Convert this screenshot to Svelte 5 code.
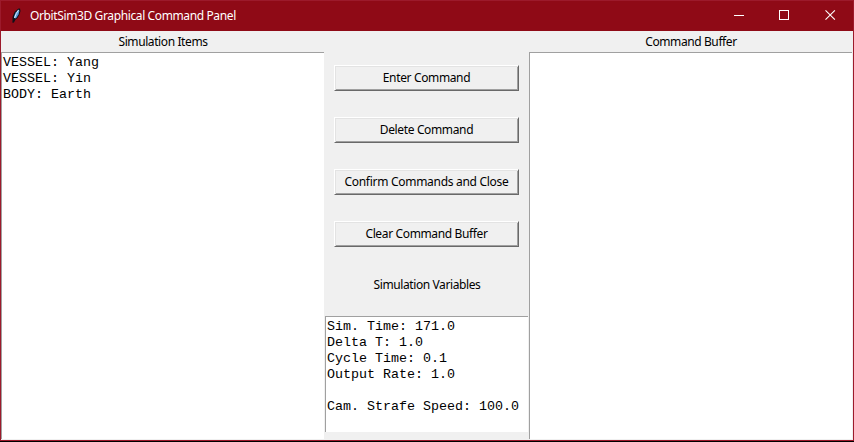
<script>
  const items = ['VESSEL: Yang', 'VESSEL: Yin', 'BODY: Earth'];
  const commands = [
    { label: 'Enter Command', spacing: -0.36 },
    { label: 'Delete Command', spacing: -0.36 },
    { label: 'Confirm Commands and Close', spacing: -0.29 },
    { label: 'Clear Command Buffer', spacing: -0.36 }
  ];
  const variables = [
    'Sim. Time: 171.0',
    'Delta T: 1.0',
    'Cycle Time: 0.1',
    'Output Rate: 1.0',
    '',
    'Cam. Strafe Speed: 100.0'
  ];
</script>

<div class="window">
  <header>
    <svg class="feather" width="12" height="18" viewBox="0 0 12 18" aria-hidden="true">
      <path d="M8.500 1.500 L10 1.500 L10.500 4 L9.500 7.500 L7.500 11 L5.500 12.500 L4 15.500 L2.500 15.500 L2.500 10 L4.500 5 Z" fill="#101018" />
      <path d="M8.800 2.500 L9.400 4 L8.500 7.500 L6.500 10.700 L4.300 12 L4 9.500 L5.700 5.500 Z" fill="#5c9cdc" />
      <path d="M8.500 3 L6.300 6.500 L4.500 11" fill="none" stroke="#d8ecf8" stroke-width="1" />
      <path d="M4.500 11 L3 15.500" fill="none" stroke="#101018" stroke-width="1" />
    </svg>
    <h1><span>OrbitSim3D Graphical Command Panel</span></h1>
    <nav>
      <svg width="46" height="30" viewBox="0 0 46 30" shape-rendering="crispEdges"><path d="M18 14h10v1H18z" fill="#fff" /></svg>
      <svg width="46" height="30" viewBox="0 0 46 30" shape-rendering="crispEdges"><rect x="17.5" y="9.5" width="9" height="9" fill="none" stroke="#fff" /></svg>
      <svg width="46" height="30" viewBox="0 0 46 30"><path d="M17.500 9.300l9.400 9.400M26.900 9.300l-9.400 9.400" fill="none" stroke="#fff" stroke-width="1.1" /></svg>
    </nav>
  </header>

  <main>
    <section class="side">
      <h2>Simulation Items</h2>
      <div class="box">{#each items as line}<p>{line}</p>{/each}</div>
    </section>

    <section class="middle">
      <div class="buttons">
        {#each commands as c}
          <button style="letter-spacing: {c.spacing}px">{c.label}</button>
        {/each}
      </div>
      <h2 class="vars">Simulation Variables</h2>
      <div class="box values">{#each variables as line}<p>{line}</p>{/each}</div>
    </section>

    <section class="side">
      <h2>Command Buffer</h2>
      <div class="box"></div>
    </section>
  </main>
</div>

<style>
  :global(body) { margin: 0; overflow: hidden; background: #000; }
  .window {
    box-sizing: border-box;
    width: 854px;
    height: 441px;
    display: flex;
    flex-direction: column;
    border: 1px solid #9c1a2b;
    background: #f0f0f0;
    color: #000;
    font-family: "Noto Sans", "Open Sans", sans-serif;
    font-size: 12px;
  }
  header {
    flex: 0 0 30px;
    display: flex;
    align-items: center;
    background: #8f0a16;
    color: #fff;
  }
  .feather { margin: 0 8px 0 9px; }
  h1, h2, p { margin: 0; font-weight: 400; }
  h1 { flex: 1; font-size: 12px; line-height: 28px; letter-spacing: -0.38px; white-space: nowrap; }
  nav { display: flex; margin-right: -1px; }
  nav svg { display: block; }
  main { flex: 1; min-height: 0; display: flex; }
  .side { width: 324px; display: flex; flex-direction: column; }
  h2 { height: 21px; font-size: 12px; line-height: 21px; text-align: center; letter-spacing: -0.4px; }
  .box {
    box-sizing: border-box;
    flex: 1;
    margin-right: 1px;
    padding: 2px 1px;
    border-top: 1px solid #a0a0a0;
    border-left: 1px solid #a0a0a0;
    background: #fff;
    font-family: "Liberation Mono", "Courier New", monospace;
    font-size: 13.333px;
    line-height: 16px;
  }
  .side .box { margin-bottom: 1px; }
  .box p { height: 16px; white-space: pre; }
  .middle { width: 204px; display: flex; flex-direction: column; }
  .buttons { display: flex; flex-direction: column; gap: 26px; padding: 34px 10px 0 9px; }
  button {
    box-sizing: border-box;
    width: 185px;
    height: 26px;
    padding: 0;
    border: 1px solid;
    border-color: #fff #696969 #696969 #fff;
    box-shadow: inset 1px 1px #e3e3e3, inset -1px -1px #a0a0a0;
    background: #f0f0f0;
    color: #000;
    font: inherit;
    line-height: 24px;
    white-space: nowrap;
  }
  .vars { margin: 27px 0 21px; }
  .values { flex: 0 0 116px; width: 203px; }
</style>
